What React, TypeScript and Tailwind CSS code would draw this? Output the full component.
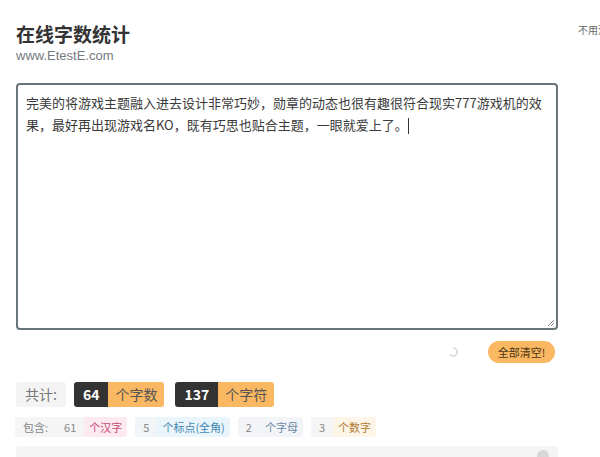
import React from 'react';

const cjk = { fontFamily: '"Noto Sans CJK SC", "Noto Sans", sans-serif' };

const content =
  '完美的将游戏主题融入进去设计非常巧妙，勋章的动态也很有趣很符合现实777游戏机的效果，最好再出现游戏名KO，既有巧思也贴合主题，一眼就爱上了。';

interface Part {
  num: string;
  label: string;
  numBg: string;
  labelCls: string;
}

const parts: Part[] = [
  { num: '61', label: '个汉字', numBg: 'bg-[#f5f5f5]', labelCls: 'bg-[#fdeaee] text-[#c8497a]' },
  { num: '5', label: '个标点(全角)', numBg: 'bg-[#f2f5f8]', labelCls: 'bg-[#eaf5fb] text-[#3f87b4]' },
  { num: '2', label: '个字母', numBg: 'bg-[#f2f4f7]', labelCls: 'bg-[#f2f4f7] text-[#6a88a6]' },
  { num: '3', label: '个数字', numBg: 'bg-[#f5f5f5]', labelCls: 'bg-[#fdf5e8] text-[#b07a30]' },
];

export default function App() {
  return (
    <div className="h-[457px] w-[600px] overflow-hidden bg-white text-[#333]" style={cjk}>
      <div className="flex">
        {/* Main column */}
        <main className="ml-4 w-[542px] shrink-0">
          <header className="pt-[21px]">
            <h1 className="text-[19px] font-bold leading-[26px] text-[#333]">在线字数统计</h1>
            <div
              className="text-[13px] leading-[18px] text-[#737980]"
              style={{ fontFamily: '"Liberation Sans", Arial, sans-serif' }}
            >
              www.EtestE.com
            </div>
          </header>

          {/* Text area */}
          <div className="relative mt-[18px] h-[247px] rounded-[4px] border-2 border-[#68757b] bg-white px-[8px] pt-[7px]">
            <p className="text-[13px] leading-[22px] text-[#3a3a3a]">
              {content}
              <span className="inline-block h-[16px] w-px bg-[#333] align-middle" />
            </p>
            <svg className="absolute bottom-[1px] right-[1px]" width="9" height="9" viewBox="0 0 9 9">
              <path d="M8 2 L2 8 M8 5 L5 8" stroke="#8a8a8a" strokeWidth="1" />
            </svg>
          </div>

          {/* Actions */}
          <div className="mt-[11px] mr-[3px] flex items-center justify-end gap-[30px]">
            <svg width="10" height="10" viewBox="0 0 10 10">
              <path d="M5 1 A4 4 0 0 1 5 9 A4 4 0 0 1 2 7.6" fill="none" stroke="#d9d9d9" strokeWidth="1.6" />
            </svg>
            <button className="h-[22px] w-[67px] rounded-full bg-[#fbb862] text-[11px] leading-[22px] text-[#4a3418]">
              全部清空!
            </button>
          </div>

          {/* Totals */}
          <div className="mt-[19px] flex items-center text-[14px] leading-[25px]">
            <span className="rounded-[3px] bg-[#f4f4f4] px-[9px] text-[#777]">共计:</span>
            <div className="ml-[8px] flex overflow-hidden rounded-[3px]">
              <span className="bg-[#333] px-[9px] font-bold text-white">64</span>
              <span className="bg-[#fbb862] px-[7px] text-[#555]">个字数</span>
            </div>
            <div className="ml-[11px] flex overflow-hidden rounded-[3px]">
              <span className="bg-[#333] px-[9px] font-bold text-white">137</span>
              <span className="bg-[#fbb862] px-[7px] text-[#555]">个字符</span>
            </div>
          </div>

          {/* Breakdown */}
          <div className="mt-[10px] flex items-center text-[11px] leading-[20px]">
            <span className="-ml-px rounded-l-[3px] bg-[#f5f5f5] pl-[8px] pr-[8px] text-[#888]">包含:</span>
            {parts.map((p, i) => (
              <div key={p.num} className={`flex overflow-hidden rounded-[3px] ${i === 0 ? '' : 'ml-[8px]'}`}>
                <span className={`${p.numBg} px-[8px] text-[#888]`}>{p.num}</span>
                <span className={`${p.labelCls} px-[5px]`}>{p.label}</span>
              </div>
            ))}
          </div>

          {/* Bottom bar */}
          <div className="mt-[9px] flex h-[40px] items-start justify-end rounded-[3px] bg-[#f5f5f5] pr-[9px] pt-[4px]">
            <span className="h-[12px] w-[12px] rounded-full bg-[#d8d8d8]" />
          </div>
        </main>

        {/* Side column */}
        <aside className="ml-[20px] overflow-hidden pt-[23px]">
          <p className="whitespace-nowrap text-[10px] leading-[14px] text-[#666]">不用注册，免费使用</p>
        </aside>
      </div>
    </div>
  );
}
